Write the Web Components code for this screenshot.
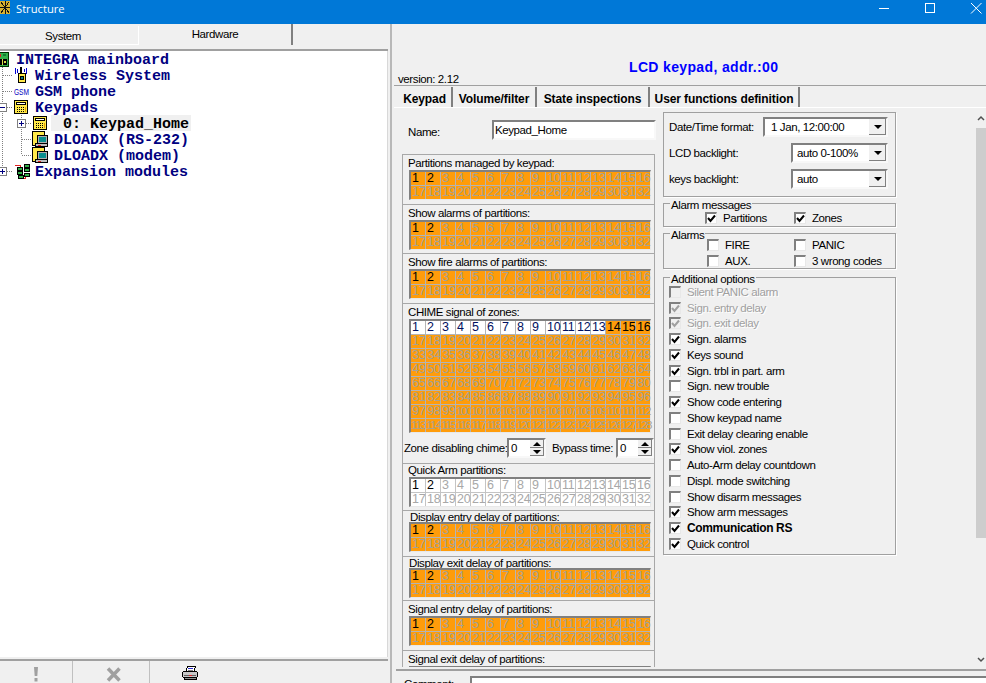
<!DOCTYPE html>
<html>
<head>
<meta charset="utf-8">
<title>Structure</title>
<style>
html, body { margin: 0; height: 100%; overflow: hidden; background: #f0f0f0; }
body { font: 11.500px "Liberation Sans", Arial, sans-serif; letter-spacing: -.4px; color: #000; }
</style>
</head>
<body>
<app-window></app-window>
<script>
const ICONS = {
    board: `<rect x="-6.500" y="1.500" width="15" height="14" fill="#33b04a" stroke="#003000"/><rect x="-2" y="8" width="9" height="6" fill="#d8e04a"/><rect x="0" y="8" width="2" height="6" fill="#000"/><rect x="3" y="8" width="4" height="6" fill="#000"/><rect x="4" y="10" width="2" height="2" fill="#d8e04a"/><rect x="-2" y="3" width="3" height="3" fill="#e02020"/><rect x="3" y="3" width="3" height="2" fill="#108030"/>`,
    wireless: `<g fill="none" stroke="#0000d0"><path d="M3 1.500Q1 4 3 6.500M5 2.500Q4 4 5 5.500M13 1.500Q15 4 13 6.500M11 2.500Q12 4 11 5.500"/></g><rect x="7" y="0" width="2" height="8" fill="#000"/><rect x="5.500" y="6.500" width="7" height="9" fill="#ffe94a" stroke="#000"/><rect x="7.500" y="9.500" width="3" height="3" fill="#0a7f7f" stroke="#000"/>`,
    keypad: `<rect x="1.500" y="1.500" width="13" height="13" fill="#ffe94a" stroke="#000"/><rect x="0.500" y="3.500" width="1" height="9" fill="#000"/><rect x="3.500" y="3.500" width="9" height="2" fill="#fff" stroke="#000"/><path d="M4 8h1M6 8h1M8 8h1M10 8h1M4 10h1M6 10h1M8 10h1M10 10h1M4 12h1M6 12h1M8 12h1M10 12h1" stroke="#000"/><rect x="12" y="8" width="1" height="5" fill="#e0a000"/>`,
    pc: `<rect x="0.500" y="0.500" width="12" height="14" fill="#ffe94a" stroke="#000"/><rect x="5.500" y="4.500" width="10" height="8" fill="#b0b0b0" stroke="#000"/><rect x="7" y="6" width="7" height="5" fill="#0a8f8f"/><rect x="3.500" y="12.500" width="12" height="3" fill="#c0c0c0" stroke="#000"/><rect x="6" y="14" width="3" height="1" fill="#e02020"/>`,
    modules: `<path d="M2 2h5v4M7 11v4h5v-3h3" fill="none" stroke="#e02020"/><g fill="#33b04a" stroke="#000"><rect x="4.500" y="4.500" width="5" height="3"/><rect x="4.500" y="8.500" width="5" height="3"/><rect x="5.500" y="12.500" width="5" height="3"/><rect x="11.500" y="1.500" width="5" height="3"/><rect x="11.500" y="5.500" width="5" height="3"/><rect x="11.500" y="10.500" width="5" height="3"/></g>`,
};

class AppTitlebar extends HTMLElement {
    constructor() {
        super();
        this.attachShadow({mode: "open"});
    }
    connectedCallback() {
        this.shadowRoot.innerHTML = `
            <style>
                :host { display: flex; align-items: flex-start; height: 24px; background: #0078d7; color: #fff; flex: none; }
                .logo { width: 11px; height: 16px; margin-right: 5px; flex: none; }
                .name { flex: 1; font: 11.200px/17px "Open Sans", sans-serif; letter-spacing: 0; }
                svg.ctl { width: 46px; height: 24px; flex: none; }
            </style>
            <svg class="logo" viewBox="0 0 11 16" shape-rendering="crispEdges">
                <rect x="0" y="1" width="10" height="13" fill="#d8b030"/><path d="M0 7.500h10M5 1v13M1 2l8 11M9 2l-8 11" stroke="#111" fill="none"/>
            </svg>
            <span class="name">Structure</span>
            <svg class="ctl" viewBox="0 0 46 24"><rect x="18" y="8" width="10" height="1" fill="#fff"/></svg>
            <svg class="ctl" viewBox="0 0 46 24"><rect x="18.500" y="3.500" width="9" height="9" fill="none" stroke="#fff"/></svg>
            <svg class="ctl" viewBox="0 0 46 24" style="margin-right:-13px"><path d="M18 3l10.500 10.500M28.500 3L18 13.500" stroke="#fff" fill="none"/></svg>
        `;
    }
}

class SideTabs extends HTMLElement {
    constructor() {
        super();
        this.attachShadow({mode: "open"});
    }
    connectedCallback() {
        this.shadowRoot.innerHTML = `
            <style>
                :host { display: flex; height: 27px; flex: none; box-sizing: border-box; border-bottom: 2px solid #a0a0a0; background: #f0f0f0; }
                div { text-align: center; box-sizing: border-box; }
                .sys { width: 139px; height: 19px; margin-top: 2px; padding-right: 12px; border-right: 1px solid #fff; border-bottom: 1px solid #fff; line-height: 20px; }
                .hard { width: 154px; height: 21px; border-right: 2px solid #808080; line-height: 21px; }
            </style>
            <div class="sys">System</div>
            <div class="hard">Hardware</div>
        `;
    }
}

class TreeRow extends HTMLElement {
    constructor() {
        super();
        this.attachShadow({mode: "open"});
    }
    connectedCallback() {
        const level = Number(this.getAttribute("level") || 0);
        const box = this.getAttribute("box");
        const icon = this.getAttribute("icon");
        const last = this.hasAttribute("last");
        const width = [16, 35, 54][level];
        const iconX = [0, 13, 32][level];

        let lines = "";
        if (level > 0) {
            lines += `<path d="M2.500 0V${last ? 8 : 16}" stroke="#808080" stroke-dasharray="1 1"/>`;
            if (level === 1) lines += `<path d="M3 8.500H13" stroke="#808080" stroke-dasharray="1 1"/>`;
        }
        if (level === 2) {
            lines += `<path d="M21.500 0V${this.hasAttribute("end") ? 8 : 16}M22 8.500H32" stroke="#808080" stroke-dasharray="1 1"/>`;
        }
        if (box) {
            const cx = level === 2 ? 21 : 2;
            lines += `<rect x="${cx - 4 + .5}" y="4.500" width="8" height="8" fill="#fff" stroke="#808080"/><path d="M${cx - 2} 8.500h5${box === "plus" ? `M${cx + .5} 6v5` : ""}" stroke="#000080"/>`;
        }
        const art = icon === "gsm"
            ? `<text x="${iconX + 1}" y="12" font-family="Liberation Sans, sans-serif" font-size="9" letter-spacing="0" textLength="15" lengthAdjust="spacingAndGlyphs" fill="#0000c0">GSM</text>`
            : `<g transform="translate(${iconX} 0)">${ICONS[icon]}</g>`;

        this.shadowRoot.innerHTML = `
            <style>
                :host { display: flex; height: 16px; align-items: center; }
                svg { width: ${width}px; height: 16px; flex: none; overflow: hidden; }
                .label { height: 16px; font: bold 15px/19px "Liberation Mono", monospace; letter-spacing: 0; color: #000080; white-space: pre; }
                :host([selected]) .label { color: #000; background: #f0f0f0; margin-left: -3px; padding-left: 12px; padding-right: 2px; }
            </style>
            <svg viewBox="0 0 ${width} 16" shape-rendering="crispEdges">${lines}${art}</svg>
            <span class="label"><slot></slot></span>
        `;
    }
}

class AppTree extends HTMLElement {
    constructor() {
        super();
        this.attachShadow({mode: "open"});
    }
    connectedCallback() {
        this.shadowRoot.innerHTML = `
            <style>
                :host { display: block; flex: 1; min-height: 0; background: #fff; margin-bottom: 2px; border-right: 1px solid #d8d8d8; overflow: hidden; }
            </style>
            <tree-row icon="board">INTEGRA mainboard</tree-row>
            <tree-row level="1" icon="wireless">Wireless System</tree-row>
            <tree-row level="1" icon="gsm">GSM phone</tree-row>
            <tree-row level="1" icon="keypad" box="minus">Keypads</tree-row>
            <tree-row level="2" icon="keypad" box="plus" selected>0: Keypad_Home</tree-row>
            <tree-row level="2" icon="pc">DLOADX (RS-232)</tree-row>
            <tree-row level="2" icon="pc" end>DLOADX (modem)</tree-row>
            <tree-row level="1" icon="modules" box="plus" last>Expansion modules</tree-row>
        `;
    }
}

class AppToolbar extends HTMLElement {
    constructor() {
        super();
        this.attachShadow({mode: "open"});
    }
    connectedCallback() {
        this.shadowRoot.innerHTML = `
            <style>
                :host { display: flex; height: 24px; box-sizing: border-box; flex: none; border-top: 2px solid #a0a0a0; }
                div { display: flex; justify-content: center; padding-top: 6px; box-sizing: border-box; }
                .a { width: 73px; border-right: 1px solid #c0c0c0; }
                .b { width: 77px; border-right: 1px solid #c0c0c0; padding-left: 5px; }
                .c { width: 81px; padding-top: 5px; }
            </style>
            <div class="a"><svg width="6" height="15" viewBox="0 0 6 15"><path d="M1 0h4L4.300 9H1.700z M1.500 11h3v3.500h-3z" fill="#a0a0a0"/></svg></div>
            <div class="b"><svg width="15" height="15" viewBox="0 0 15 15"><path d="M2 1.500l11.500 12M13.500 1.500L2 13.500" stroke="#a0a0a0" stroke-width="3.500" fill="none"/></svg></div>
            <div class="c"><svg width="17" height="15" viewBox="0 0 17 15" shape-rendering="crispEdges">
                <path d="M5.500 .5h8l-1.500 5h-8z" fill="#fff" stroke="#000"/><path d="M6 2h5" stroke="#3030d0"/><path d="M6 4h5" stroke="#808080"/>
                <rect x=".5" y="5.500" width="15" height="6" rx="2" fill="#c8c8c8" stroke="#000"/><rect x="2" y="9" width="12" height="1" fill="#606060"/><rect x="7" y="9" width="3" height="1" fill="#e02020"/>
                <rect x="2.500" y="11.500" width="12" height="2" fill="#909090" stroke="#000"/>
            </svg></div>
        `;
    }
}

class ZoneGrid extends HTMLElement {
    constructor() {
        super();
        this.attachShadow({mode: "open"});
    }
    static get styles() {
        return `
            :host { display: inline-grid; flex: none; grid-template-columns: repeat(16, 14px); grid-auto-rows: 13px; gap: 1px; background: #b4b4b4;
                border: 1px solid #fff; border-width: 2px 1px 1px 2px; border-color: #808080 #e8e8e8 #e8e8e8 #808080; }
            span { background: #ff9c0a; color: #a6a296; font: 12.500px/13px "Liberation Sans", sans-serif; letter-spacing: -.3px; padding-left: 1px; white-space: nowrap; }
            span.off { background: #fff; color: #a8a8a8; }
            span.on { color: #000; }
            span.long { font-size: 11.500px; letter-spacing: -1.450px; padding-left: 0; }
            :host([plain]) { background: #c4c4c4; }
            :host([ink]) span.on.off { color: #001060; }
        `;
    }
    connectedCallback() {
        const count = this.hasAttribute("count") ? Number(this.getAttribute("count")) : 32;
        const on = Number(this.getAttribute("on") || 2);
        const white = Number(this.getAttribute("white") || 0);
        let cells = "";
        for (let i = 1; i <= count; i++) {
            const cls = [];
            if (i <= on) cls.push("on");
            if (i <= white) cls.push("off");
            if (i > 99) cls.push("long");
            cells += `<span class="${cls.join(" ")}">${i}</span>`;
        }
        this.shadowRoot.innerHTML = `<style>${ZoneGrid.styles}</style>${cells}`;
    }
}

class GridSection extends HTMLElement {
    constructor() {
        super();
        this.attachShadow({mode: "open"});
    }
    connectedCallback() {
        const h = this.getAttribute("h");
        const pad = this.getAttribute("pad") || 5;
        const lh = Number(this.getAttribute("lh") || 15);
        this.shadowRoot.innerHTML = `
            <style>
                :host { display: block; height: ${h}px; box-sizing: border-box; border-bottom: 1px solid #a8a8a8; overflow: hidden; }
                :host([open]) { border-bottom: 0; }
                .label { height: ${lh}px; line-height: ${lh < 15 ? 12 : 16}px; padding-left: ${pad}px; white-space: nowrap; }
                .body { padding-left: 6px; display: flex; flex-direction: column; align-items: flex-start; }
            </style>
            <div class="label">${this.getAttribute("label")}</div>
            <div class="body"><slot></slot></div>
        `;
    }
}

class SunkenBox extends HTMLElement {
    constructor() {
        super();
        this.attachShadow({mode: "open"});
    }
    static get styles() {
        return `
            :host { display: flex; box-sizing: border-box; height: 20px; background: #fff; border: 2px solid #808080; border-right-color: #f8f8f8; border-bottom-color: #f8f8f8; align-items: center; overflow: hidden; }
            .text { flex: 1; padding-left: var(--pad, 2px); white-space: nowrap; }
            .btn { width: 17px; align-self: stretch; background: #f0f0f0; box-shadow: inset -1px -1px 0 #808080; display: flex; align-items: center; justify-content: center; flex: none; }
            .btn i { border: 4px solid transparent; border-top: 4px solid #000; border-bottom: 0; }
            .spin { width: 14px; align-self: stretch; background: #f0f0f0; display: flex; flex-direction: column; flex: none; }
            .spin b { flex: 1; display: flex; align-items: center; justify-content: center; box-shadow: inset -1px -1px 0 #808080; }
            .spin i { border: 4px solid transparent; border-bottom: 4px solid #000; border-top: 0; }
            .spin b + b i { border-top: 4px solid #000; border-bottom: 0; }
        `;
    }
    connectedCallback() {
        const type = this.getAttribute("type");
        const tail = type === "combo" ? `<div class="btn"><i></i></div>`
            : type === "spin" ? `<div class="spin"><b><i></i></b><b><i></i></b></div>` : "";
        this.shadowRoot.innerHTML = `<style>${SunkenBox.styles}</style><span class="text"><slot></slot></span>${tail}`;
    }
}

class CheckRow extends HTMLElement {
    constructor() {
        super();
        this.attachShadow({mode: "open"});
    }
    connectedCallback() {
        const tick = this.hasAttribute("checked");
        this.shadowRoot.innerHTML = `
            <style>
                :host { display: flex; align-items: center; gap: var(--check-gap, 6px); white-space: nowrap; }
                .box { flex: none; background: #fff; border: 1px solid #808080; border-width: 2px 1px 1px 2px; border-color: #808080 #e8e8e8 #e8e8e8 #808080; width: 9px; height: 9px; }
                svg { display: block; }
                :host([disabled]) { color: #a0a0a0; text-shadow: 1px 1px 0 #fff; }
                :host([disabled]) .box { background: #f0f0f0; }
                :host([strong]) { font-weight: bold; font-size: 12px; letter-spacing: -.35px; }
            </style>
            <span class="box">${tick ? `<svg width="9" height="9" viewBox="0 0 9 9"><path d="M1 4l2.500 3L8 1.500" fill="none" stroke="${this.hasAttribute("disabled") ? "#a0a0a0" : "#000"}" stroke-width="2"/></svg>` : ""}</span>
            <span><slot></slot></span>
        `;
    }
}

class OptionGroup extends HTMLElement {
    constructor() {
        super();
        this.attachShadow({mode: "open"});
    }
    connectedCallback() {
        const title = this.getAttribute("title");
        this.shadowRoot.innerHTML = `
            <style>
                :host { display: block; position: relative; box-sizing: border-box; border: 1px solid #a0a0a0; box-shadow: 1px 1px 0 #fff; }
                .legend { position: absolute; left: 6px; top: -5px; padding: 0 1px; line-height: 13px; background: #f0f0f0; }
            </style>
            ${title ? `<div class="legend">${title}</div>` : ""}
            <slot></slot>
        `;
    }
}

class KeypadForm extends HTMLElement {
    constructor() {
        super();
        this.attachShadow({mode: "open"});
    }
    connectedCallback() {
        const options = [
            ["Silent PANIC alarm", "disabled"], ["Sign. entry delay", "disabled checked"], ["Sign. exit delay", "disabled checked"],
            ["Sign. alarms", "checked"], ["Keys sound", "checked"], ["Sign. trbl in part. arm", "checked"], ["Sign. new trouble", ""],
            ["Show code entering", "checked"], ["Show keypad name", ""], ["Exit delay clearing enable", ""], ["Show viol. zones", "checked"],
            ["Auto-Arm delay countdown", ""], ["Displ. mode switching", ""], ["Show disarm messages", ""], ["Show arm messages", "checked"],
            ["Communication RS", "checked strong"], ["Quick control", "checked"],
        ];
        this.shadowRoot.innerHTML = `
            <style>
                :host { display: grid; grid-template-columns: 253px 233px; column-gap: 8px; align-items: start; flex: 1; padding: 4px 0 0 8px; height: 100%; box-sizing: border-box; overflow: hidden; }
                .left { padding-top: 8px; }
                .name { display: flex; align-items: center; height: 20px; margin-bottom: 14px; padding-left: 6px; }
                .name span { width: 84px; padding-top: 3px; flex: none; }
                .name sunken-box { width: 164px; --pad: 1px; flex: none; }
                .sections { border: 1px solid #a8a8a8; border-bottom: 0; width: 253px; box-sizing: border-box; height: 513px; overflow: hidden; }
                .spins { display: flex; align-items: center; height: 20px; margin: 5px 0 0 -5px; white-space: nowrap; }
                .spins sunken-box { width: 39px; margin: 0 0 0 1px; flex: none; }
                .spins .a { width: 102px; flex: none; }
                .spins .b { margin-left: 6px; width: 64px; flex: none; }
                .spins .b + sunken-box { width: 38px; margin: 0; }
                .right { display: flex; flex-direction: column; }
                .fmt { height: 85px; padding: 4px 7px 0 5px; display: grid; gap: 6px; grid-template-rows: 20px 20px 20px; margin-bottom: 6px; }
                .fmt div { display: flex; justify-content: space-between; align-items: center; }
                .msgs { height: 24px; margin-bottom: 6px; padding: 5px 0 0 41px; display: grid; grid-template-columns: 89px 1fr; }
                .alarms { height: 36px; margin-bottom: 8px; display: grid; grid-template-columns: 87px 1fr; grid-auto-rows: 16px; padding: 3px 0 0 43px; }
                .more { height: 278px; padding: 6px 0 0 5px; display: grid; grid-auto-rows: 15.750px; }
            </style>
            <div class="left">
                <div class="name"><span>Name:</span><sunken-box>Keypad_Home</sunken-box></div>
                <div class="sections">
                    <grid-section h="50" label="Partitions managed by keypad:"><zone-grid></zone-grid></grid-section>
                    <grid-section h="49" label="Show alarms of partitions:"><zone-grid></zone-grid></grid-section>
                    <grid-section h="50" label="Show fire alarms of partitions:"><zone-grid></zone-grid></grid-section>
                    <grid-section h="160" label="CHIME signal of zones:">
                        <zone-grid count="128" on="16" white="13" ink></zone-grid>
                        <div class="spins">
                            <span class="a">Zone disabling chime:</span><sunken-box type="spin">0</sunken-box>
                            <span class="b">Bypass time:</span><sunken-box type="spin">0</sunken-box>
                        </div>
                    </grid-section>
                    <grid-section h="47" lh="13" label="Quick Arm partitions:"><zone-grid white="32" plain></zone-grid></grid-section>
                    <grid-section h="46" lh="11" pad="7" label="Display entry delay of partitions:"><zone-grid></zone-grid></grid-section>
                    <grid-section h="44" lh="11" pad="6" label="Display exit delay of partitions:"><zone-grid></zone-grid></grid-section>
                    <grid-section h="50" label="Signal entry delay of partitions:"><zone-grid></zone-grid></grid-section>
                    <grid-section h="17" label="Signal exit delay of partitions:" open><zone-grid count="0"></zone-grid></grid-section>
                </div>
            </div>
            <div class="right">
                <option-group class="fmt">
                    <div><span>Date/Time format:</span><sunken-box type="combo" style="width:125px;--pad:6px">1 Jan, 12:00:00</sunken-box></div>
                    <div><span>LCD backlight:</span><sunken-box type="combo" style="width:97px;--pad:4px">auto 0-100%</sunken-box></div>
                    <div><span>keys backlight:</span><sunken-box type="combo" style="width:97px;--pad:4px">auto</sunken-box></div>
                </option-group>
                <option-group class="msgs" title="Alarm messages">
                    <check-row checked>Partitions</check-row>
                    <check-row checked>Zones</check-row>
                </option-group>
                <option-group class="alarms" title="Alarms">
                    <check-row>FIRE</check-row><check-row>PANIC</check-row>
                    <check-row>AUX.</check-row><check-row>3 wrong codes</check-row>
                </option-group>
                <option-group class="more" title="Additional options">
                    ${options.map(o => `<check-row ${o[1]}>${o[0]}</check-row>`).join("")}
                </option-group>
            </div>
        `;
    }
}

class PageTabs extends HTMLElement {
    constructor() {
        super();
        this.attachShadow({mode: "open"});
    }
    connectedCallback() {
        const tabs = [["Keypad", 55], ["Volume/filter", 84], ["State inspections", 113], ["User functions definition", 150]];
        this.shadowRoot.innerHTML = `
            <style>
                :host { display: flex; height: 23px; flex: none; box-sizing: border-box; border-top: 1px solid #a0a0a0; border-bottom: 1px solid #fff; padding-left: 4px; font: bold 12px "Liberation Sans", sans-serif; letter-spacing: -.1px; }
                div { box-sizing: border-box; border-right: 2px solid #808080; text-align: center; height: 20px; line-height: 24px; white-space: nowrap; margin-top: 1px; }
                div:first-child { line-height: 19px; }
            </style>
            ${tabs.map(t => `<div style="width:${t[1]}px">${t[0]}</div>`).join("")}
        `;
    }
}

class AppScrollbar extends HTMLElement {
    constructor() {
        super();
        this.attachShadow({mode: "open"});
    }
    connectedCallback() {
        this.shadowRoot.innerHTML = `
            <style>
                :host { display: flex; flex-direction: column; align-items: stretch; width: 10px; flex: none; box-sizing: border-box; }
                svg { display: block; height: 20px; width: 10px; flex: none; }
                .thumb { height: 410px; background: #cdcdcd; flex: none; }
                .track { flex: 1; }
            </style>
            <svg viewBox="0 0 10 20"><path d="M2 12l3-3 3 3" fill="none" stroke="#505050" stroke-width="1.500"/></svg>
            <div class="thumb"></div>
            <div class="track"></div>
            <svg viewBox="0 0 10 20"><path d="M2 9l3 3 3-3" fill="none" stroke="#505050" stroke-width="1.500"/></svg>
        `;
    }
}

class RightPane extends HTMLElement {
    constructor() {
        super();
        this.attachShadow({mode: "open"});
    }
    connectedCallback() {
        this.shadowRoot.innerHTML = `
            <style>
                :host { display: flex; flex-direction: column; flex: 1; min-width: 0; overflow: hidden; }
                header { height: 61px; flex: none; display: flex; flex-direction: column; justify-content: flex-end; padding-left: 4px; box-sizing: border-box; }
                h1 { font: bold 14px/16px "Liberation Sans", sans-serif; letter-spacing: .35px; color: #0000ff; margin: 0 0 -2px 231px; }
                .ver { line-height: 13px; margin-bottom: -1px; }
                .scroll { display: flex; justify-content: space-between; flex: 1; min-height: 0; }
                .foot { height: 14px; flex: none; border-top: 2px solid #a0a0a0; display: flex; padding-left: 8px; gap: 13px; box-sizing: border-box; overflow: hidden; padding-top: 5px; margin-left: 2px; }
                .foot .input { flex: 1; height: 24px; background: #fff; border: 2px solid #808080; border-right: 0; }
                .foot span { line-height: 16px; width: 53px; }
            </style>
            <header>
                <h1>LCD keypad, addr.:00</h1>
                <div class="ver">version: 2.12</div>
            </header>
            <page-tabs></page-tabs>
            <div class="scroll">
                <keypad-form></keypad-form>
                <app-scrollbar></app-scrollbar>
            </div>
            <div class="foot"><span>Comment:</span><div class="input"></div></div>
        `;
    }
}

class AppWindow extends HTMLElement {
    constructor() {
        super();
        this.attachShadow({mode: "open"});
    }
    connectedCallback() {
        this.shadowRoot.innerHTML = `
            <style>
                :host { display: flex; flex-direction: column; width: 986px; height: 683px; overflow: hidden; }
                .main { flex: 1; display: flex; min-height: 0; }
                .left { width: 388px; flex: none; display: flex; flex-direction: column; }
                .split { width: 6px; flex: none; box-sizing: border-box; border-left: 2px solid #f0f0f0; }
                .split::after { content: ""; display: block; width: 2px; height: 100%; background: #b8b8b8; }
            </style>
            <app-titlebar></app-titlebar>
            <div class="main">
                <div class="left">
                    <side-tabs></side-tabs>
                    <app-tree></app-tree>
                    <app-toolbar></app-toolbar>
                </div>
                <div class="split"></div>
                <right-pane></right-pane>
            </div>
        `;
    }
}

customElements.define("tree-row", TreeRow);
customElements.define("app-tree", AppTree);
customElements.define("app-titlebar", AppTitlebar);
customElements.define("side-tabs", SideTabs);
customElements.define("app-toolbar", AppToolbar);
customElements.define("zone-grid", ZoneGrid);
customElements.define("grid-section", GridSection);
customElements.define("sunken-box", SunkenBox);
customElements.define("check-row", CheckRow);
customElements.define("option-group", OptionGroup);
customElements.define("keypad-form", KeypadForm);
customElements.define("page-tabs", PageTabs);
customElements.define("app-scrollbar", AppScrollbar);
customElements.define("right-pane", RightPane);
customElements.define("app-window", AppWindow);
</script>
</body>
</html>
